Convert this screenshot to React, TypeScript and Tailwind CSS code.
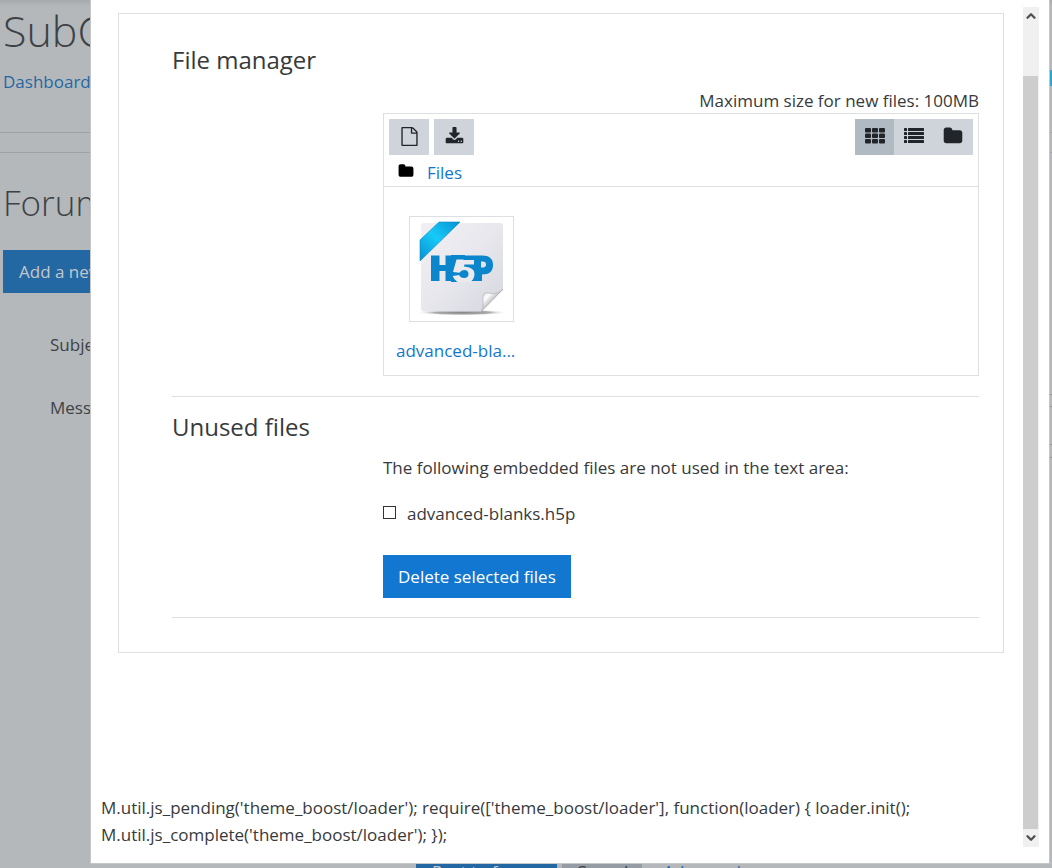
import React, { useState } from 'react';
import { ChevronDown, ChevronUp } from 'lucide-react';

interface GlyphProps {
  className?: string;
}

const FileGlyph: React.FC<GlyphProps> = ({ className }) => (
  <svg viewBox="0 0 1792 1792" fill="currentColor" className={className} aria-hidden="true">
    <path d="M1596 380q28 28 48 76t20 88v1152q0 40-28 68t-68 28h-1344q-40 0-68-28t-28-68v-1600q0-40 28-68t68-28h896q40 0 88 20t76 48zm-444-244v376h376q-10-29-22-41l-313-313q-12-12-41-22zm384 1528v-1024h-416q-40 0-68-28t-28-68v-416h-768v1536h1280z" />
  </svg>
);

const DownloadGlyph: React.FC<GlyphProps> = ({ className }) => (
  <svg viewBox="0 0 1792 1792" fill="currentColor" className={className} aria-hidden="true">
    <path d="M1344 1344q0-26-19-45t-45-19-45 19-19 45 19 45 45 19 45-19 19-45zm256 0q0-26-19-45t-45-19-45 19-19 45 19 45 45 19 45-19 19-45zm128-224v320q0 40-28 68t-68 28h-1472q-40 0-68-28t-28-68v-320q0-40 28-68t68-28h465l135 136q58 56 136 56t136-56l136-136h464q40 0 68 28t28 68zm-325-569q17 41-14 70l-448 448q-18 19-45 19t-45-19l-448-448q-31-29-14-70 17-39 59-39h256v-448q0-26 19-45t45-19h256q26 0 45 19t19 45v448h256q42 0 59 39z" />
  </svg>
);

const FolderGlyph: React.FC<GlyphProps> = ({ className }) => (
  <svg viewBox="0 0 1792 1792" fill="currentColor" className={className} aria-hidden="true">
    <path d="M1728 608v704q0 92-66 158t-158 66h-1216q-92 0-158-66t-66-158v-960q0-92 66-158t158-66h320q92 0 158 66t66 158v32h672q92 0 158 66t66 158z" />
  </svg>
);

const GridGlyph: React.FC<GlyphProps> = ({ className }) => (
  <svg viewBox="0 0 20 16" fill="currentColor" className={className} aria-hidden="true">
    {[0, 5.5, 11].map((y) =>
      [0, 7, 14].map((x) => <rect key={`${x}-${y}`} x={x} y={y} width="6" height="4.5" rx="1" />)
    )}
  </svg>
);

const ListGlyph: React.FC<GlyphProps> = ({ className }) => (
  <svg viewBox="0 0 20 16" fill="currentColor" className={className} aria-hidden="true">
    {[0, 4, 8, 12].map((y) => (
      <g key={y}>
        <rect x="0" y={y} width="3" height="3" rx="0.5" />
        <rect x="4" y={y} width="16" height="3" rx="0.5" />
      </g>
    ))}
  </svg>
);

const H5PIcon: React.FC<GlyphProps> = ({ className }) => (
  <svg viewBox="0 0 96 96" className={className} aria-hidden="true">
    <defs>
      <linearGradient id="paper" x1="0" y1="0" x2="1" y2="1">
        <stop offset="0" stopColor="#f0f0f4" />
        <stop offset="0.5" stopColor="#e7e7ed" />
        <stop offset="1" stopColor="#d6d6df" />
      </linearGradient>
      <linearGradient id="ribbon" x1="0" y1="1" x2="1" y2="0">
        <stop offset="0" stopColor="#078fd2" />
        <stop offset="0.5" stopColor="#16cbf8" />
        <stop offset="1" stopColor="#078fd2" />
      </linearGradient>
      <linearGradient id="curl" x1="0" y1="0" x2="1" y2="1">
        <stop offset="0" stopColor="#b8b8bd" />
        <stop offset="0.3" stopColor="#ffffff" />
        <stop offset="0.5" stopColor="#c5c5c9" />
        <stop offset="0.65" stopColor="#f4f4f4" />
      </linearGradient>
      <radialGradient id="shade">
        <stop offset="0" stopColor="#888" />
        <stop offset="0.6" stopColor="#aaa" />
        <stop offset="1" stopColor="#fff" stopOpacity="0" />
      </radialGradient>
    </defs>
    <ellipse cx="48" cy="91.5" rx="46" ry="3" fill="url(#shade)" />
    <path d="M10 2h76q3 0 3 3v64L67 90.500H10q-3 0-3-3V5q0-3 3-3z" fill="url(#paper)" />
    <path d="M89 68Q84 74 74 72Q68 71 69 79Q70 87 67 91z" fill="url(#curl)" stroke="#aaaab0" strokeWidth="0.6" />
    <path d="M6 40L46 1H25L6 19z" fill="url(#ribbon)" stroke="#0b8ac0" strokeWidth="0.6" />
    {/* brand mark: blue slab with the middle figure cut out of it */}
    <g fill="#0b85cc">
      <path d="M17 34.500h8.500v9.500h6v-9.500H41V60h-9.500V50h-6v10H17z" />
      <path fillRule="evenodd" d="M41 34.500h27q11 0 11 9.500t-11 9.500V60H41zM67 40.500v6h2q3 0 3-3t-3-3z" />
    </g>
    <path d="M41.500 34.500H50L49.500 39H60v4.500H50.500L50 45.500Q60.500 46 60.500 53Q60.500 58 56 61H44Q40 59 38 55L37.500 51.500z" fill="#e9e9ee" />
    <path d="M41.500 34H51l-.7 4.500H42.500L39 51l6.500.7Q47 49 50 49q4.500 0 4.500 4t-4.500 4q-3.500 0-5-3L38.500 55q1.500 4 5 6H37V34z" fill="#0b85cc" />
  </svg>
);

const BackgroundPage: React.FC = () => (
  <div className="flex h-screen flex-col overflow-hidden bg-[#b4b8bb] text-[#3d4246]">
    <header className="h-[133px] shrink-0 border-b border-[#9fa3a7] bg-linear-to-b from-[#a6aaad] to-[#b4b8bb] to-5% pl-[3px]">
      <h1 className="pt-1 text-[43px] leading-[54px] font-light">SubCourse</h1>
      <nav className="flex justify-between pt-3 leading-6">
        <a href="#dashboard" className="text-[#2468a3]">Dashboard</a>
        <span className="h-4 w-0.5 bg-[#2fa3cc]" />
      </nav>
    </header>
    <main className="mt-[19px] flex grow flex-col border-t border-[#9fa3a7] pl-[3px]">
      <h2 className="pt-[26px] text-[35px] leading-[48px] font-light">Forum</h2>
      <div className="pt-[23px]">
        <button className="h-[43px] bg-[#2468a3] px-4 text-[#c3c7ca]">Add a new discussion topic</button>
      </div>
      <form className="flex grow flex-col pl-[47px]">
        <label htmlFor="subject" className="mt-10 leading-6">Subject</label>
        <input id="subject" className="sr-only" />
        <div className="mt-[37px] flex justify-between">
          <label htmlFor="message" className="mt-0.5 leading-6">Message</label>
          <div className="h-[13px] w-4 border-y border-[#8f9396]" />
        </div>
        <textarea id="message" className="sr-only" />
        <div className="mt-6 h-[14px] w-4 self-end border-y border-[#8f9396]" />
        <div className="mt-auto mb-[-25px] flex items-center gap-[5px] pl-[366px] leading-6">
          <button type="button" className="h-[43px] bg-[#2468a3] px-4 text-[#c3c7ca]">Post to forum</button>
          <button type="button" className="h-[43px] bg-[#959ca3] px-3.5">Cancel</button>
          <a href="#advanced" className="px-4 text-[#2468a3]">Advanced</a>
        </div>
      </form>
    </main>
  </div>
);

const FileManager: React.FC = () => {
  const [view, setView] = useState('icons');

  const views = [
    { id: 'icons', label: 'Display folder with file icons', icon: <GridGlyph className="h-4 w-5" /> },
    { id: 'list', label: 'Display folder with file details', icon: <ListGlyph className="h-4 w-5" /> },
    { id: 'tree', label: 'Display folder as file tree', icon: <FolderGlyph className="size-5" /> },
  ];

  return (
    <div className="border border-[#dedfe0]">
      <div className="border-b border-[#dedfe0]">
        <div className="flex justify-between p-[5px] pb-0">
          <div className="flex gap-[5px]">
            <button aria-label="Add" className="flex h-9 w-10 items-center justify-center bg-[#ced4da] pb-0.5 text-[#212529]">
              <FileGlyph className="size-[19px]" />
            </button>
            <button aria-label="Download all" className="flex h-9 w-10 items-center justify-center bg-[#ced4da] pb-0.5 text-[#212529]">
              <DownloadGlyph className="size-[19px]" />
            </button>
          </div>
          <div className="flex bg-[#ced4da] pr-px text-[#212529]">
            {views.map((v) => (
              <button
                key={v.id}
                aria-label={v.label}
                onClick={() => setView(v.id)}
                className={`flex h-9 w-[39px] items-center justify-center pb-0.5 ${view === v.id ? 'bg-[#b0bac3]' : ''}`}
              >
                {v.icon}
              </button>
            ))}
          </div>
        </div>
        <div className="flex h-[31px] items-center gap-[13px] pt-1 pl-[14px]">
          <FolderGlyph className="mb-1 size-4 text-black" />
          <a href="#files" className="text-[#1177d1]">Files</a>
        </div>
      </div>
      <div className="px-3 pt-[29px] pb-3">
        <a href="#file" className="block w-[119px] text-[#1177d1]">
          <span className="ml-[13px] flex h-[106px] w-[105px] items-center justify-center border border-[#dedfe0]">
            <H5PIcon className="size-24" />
          </span>
          <span className="mt-[17px] block leading-6 whitespace-nowrap">advanced-bla...</span>
        </a>
      </div>
    </div>
  );
};

const UnusedFiles: React.FC = () => {
  const [checked, setChecked] = useState(false);

  return (
    <div className="pl-[211px]">
      <p className="leading-6">The following embedded files are not used in the text area:</p>
      <div className="mt-[22px] flex items-center gap-[11px] leading-6">
        <input
          type="checkbox"
          id="unused-file"
          checked={checked}
          onChange={(e) => setChecked(e.target.checked)}
          className="mb-1 size-[13px] appearance-none border border-[#333333] bg-white checked:bg-[#1177d1]"
        />
        <label htmlFor="unused-file">advanced-blanks.h5p</label>
      </div>
      <button className="mt-[29px] h-[43px] bg-[#1177d1] px-[15px] text-white">Delete selected files</button>
    </div>
  );
};

const App: React.FC = () => {
  return (
    <div className="font-['Open_Sans','Noto_Sans',sans-serif] text-[17px] text-[#373a3c]">
      <BackgroundPage />

      {/* Dialogue */}
      <div role="dialog" aria-label="File manager" className="fixed top-0 right-0.5 bottom-1 left-[90px] flex border-x border-b border-[#c4c7c9] bg-white">
        <div className="flex min-w-0 grow flex-col overflow-hidden">
          <section className="mt-[13px] mr-[19px] ml-[27px] border border-[#dedfe0] pt-[30px] pr-6 pb-[34px] pl-[53px]">
            <h3 className="text-2xl leading-8">File manager</h3>
            <div className="pt-[13px] pl-[211px]">
              <p className="text-right leading-6">Maximum size for new files: 100MB</p>
              <FileManager />
            </div>
            <hr className="mt-5 border-[#dedfe0]" />
            <h3 className="pt-3.5 pb-[13px] text-2xl leading-8">Unused files</h3>
            <UnusedFiles />
            <hr className="mt-[19px] border-[#dedfe0]" />
          </section>
          <p className="mt-auto px-2.5 pb-[15px] leading-[27px]">
            M.util.js_pending('theme_boost/loader'); require(['theme_boost/loader'], function(loader) {'{'} loader.init();
            M.util.js_complete('theme_boost/loader'); {'}'});
          </p>
        </div>

        {/* Scroll track */}
        <div className="mt-[7px] mr-2.5 mb-4 flex w-4 shrink-0 flex-col items-center bg-[#f0f0f0] text-[#505050]">
          <ChevronUp className="my-0.5 size-3.5 shrink-0" strokeWidth={4} />
          <div className="mt-[51px] w-full grow border-r border-[#f0f0f0] bg-[#cdcdcd]" />
          <ChevronDown className="my-0.5 size-3.5 shrink-0" strokeWidth={4} />
        </div>
      </div>
    </div>
  );
};

export default App;
